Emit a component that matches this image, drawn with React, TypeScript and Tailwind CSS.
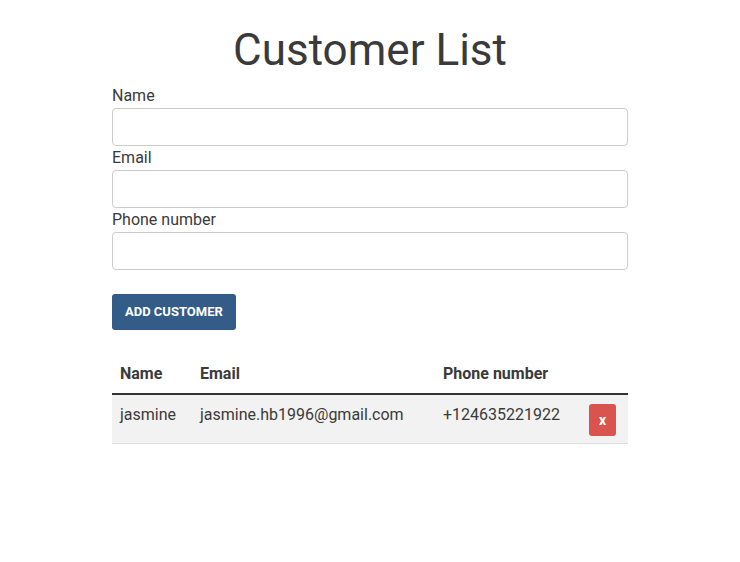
import { useState } from "react";

type Customer = {
  name: string;
  email: string;
  phone: string;
};

const initial: Customer[] = [
  { name: "jasmine", email: "jasmine.hb1996@gmail.com", phone: "+124635221922" },
];

function Field({ label, value, onChange }: { label: string; value: string; onChange: (v: string) => void }) {
  return (
    <div className="flex flex-col">
      <label className="text-[16px] leading-6 text-[#3a3a3a]">{label}</label>
      <input
        value={value}
        onChange={(e) => onChange(e.target.value)}
        className="h-[38px] w-full rounded-[4px] border border-[#ccc] bg-white px-3 text-[16px] text-[#333] outline-none"
      />
    </div>
  );
}

export default function App() {
  const [customers, setCustomers] = useState<Customer[]>(initial);
  const [name, setName] = useState("");
  const [email, setEmail] = useState("");
  const [phone, setPhone] = useState("");

  const add = () => {
    if (!name) return;
    setCustomers([...customers, { name, email, phone }]);
    setName("");
    setEmail("");
    setPhone("");
  };

  return (
    <div className="min-h-screen bg-white font-['Roboto',sans-serif] text-[#3a3a3a]">
      <div className="mx-auto w-[516px] pt-[22px]">
        <h1 className="text-center text-[44px] leading-[56px] font-normal">Customer List</h1>
        <div className="mt-[6px] flex flex-col">
          <Field label="Name" value={name} onChange={setName} />
          <Field label="Email" value={email} onChange={setEmail} />
          <Field label="Phone number" value={phone} onChange={setPhone} />
        </div>
        <button
          onClick={add}
          className="mt-6 h-9 rounded-[3px] bg-[#335d88] px-[13px] text-[13px] font-bold uppercase text-white"
        >
          Add Customer
        </button>

        <table className="mt-[22px] w-full border-collapse text-left text-[16px]">
          <thead>
            <tr className="border-b-2 border-[#333]">
              <th className="w-[80px] px-2 pt-[9px] pb-[6px] leading-[26px] font-bold">Name</th>
              <th className="w-[243px] px-2 pt-[9px] pb-[6px] leading-[26px] font-bold">Email</th>
              <th className="w-[146px] px-2 pt-[9px] pb-[6px] leading-[26px] font-bold">Phone number</th>
              <th className="px-2 py-2"></th>
            </tr>
          </thead>
          <tbody>
            {customers.map((c, i) => (
              <tr key={i} className="border-b border-[#ddd] bg-[#f2f2f2]">
                <td className="px-2 pt-[9px] pb-2 align-top leading-[22px]">{c.name}</td>
                <td className="px-2 pt-[9px] pb-2 align-top leading-[22px]">{c.email}</td>
                <td className="px-2 pt-[9px] pb-2 align-top leading-[22px]">{c.phone}</td>
                <td className="px-2 pt-[9px] pb-[7px]">
                  <button
                    onClick={() => setCustomers(customers.filter((_, j) => j !== i))}
                    className="flex h-8 w-[27px] items-center justify-center rounded-[3px] bg-[#d9534f] text-[14px] font-bold text-white"
                  >
                    x
                  </button>
                </td>
              </tr>
            ))}
          </tbody>
        </table>
      </div>
    </div>
  );
}
